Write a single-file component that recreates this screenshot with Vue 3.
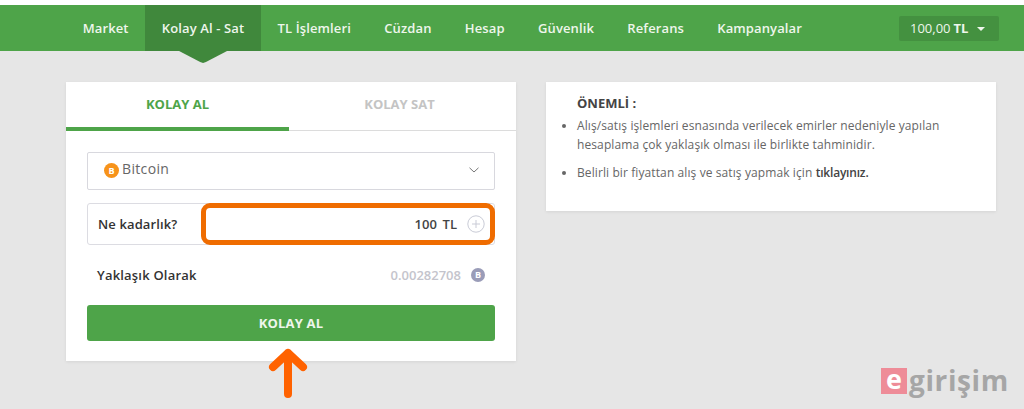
<script setup>
const navItems = ['Market', 'Kolay Al - Sat', 'TL İşlemleri', 'Cüzdan', 'Hesap', 'Güvenlik', 'Referans', 'Kampanyalar']
const activeItem = 'Kolay Al - Sat'
</script>

<template>
  <div class="page">
    <header class="nav">
      <ul class="menu">
        <li v-for="item in navItems" :key="item" class="menu-item" :class="{ active: item === activeItem }">{{ item }}</li>
      </ul>
      <div class="balance"><span>100,00</span><b>TL</b><span class="caret"></span></div>
    </header>

    <main class="content">
      <section class="card trade">
        <div class="tabs">
          <div class="tab on">KOLAY AL</div>
          <div class="tab">KOLAY SAT</div>
        </div>
        <div class="form">
          <div class="select">
            <svg class="coin" width="15" height="15" viewBox="0 0 15 15">
              <circle cx="7.5" cy="7.5" r="7.5" fill="#f7931a" />
              <text x="7.5" y="11" text-anchor="middle" class="coin-b">B</text>
            </svg>
            <span class="select-text">Bitcoin</span>
            <svg class="chev" width="10" height="6" viewBox="0 0 10 6">
              <path d="M.5 .8 5 5 9.5 .8" fill="none" stroke="#777" stroke-width="1" />
            </svg>
          </div>

          <div class="amount">
            <span class="amount-label">Ne kadarlık?</span>
            <div class="amount-box">
              <span class="amount-value">100&nbsp; TL</span>
              <svg width="18" height="18" viewBox="0 0 18 18">
                <circle cx="9" cy="9" r="8.2" fill="#fff" stroke="#c9cbd6" />
                <path d="M9 5v8M5 9h8" stroke="#c9cbd6" />
              </svg>
            </div>
          </div>

          <div class="approx">
            <span class="approx-label">Yaklaşık Olarak</span>
            <span class="approx-value">0.00282708</span>
            <svg width="14" height="14" viewBox="0 0 14 14">
              <circle cx="7" cy="7" r="7" fill="#9a9cb8" />
              <text x="7" y="10.2" text-anchor="middle" class="coin-b">B</text>
            </svg>
          </div>

          <button class="buy">KOLAY AL</button>
        </div>
        <svg class="arrow" width="40" height="52" viewBox="0 0 40 52">
          <path d="M20 47V6M5 20 20 6l15 14" fill="none" stroke="#ff6200" stroke-width="8" stroke-linecap="round" stroke-linejoin="round" />
        </svg>
      </section>

      <section class="card info">
        <h3>ÖNEMLİ :</h3>
        <ul>
          <li>Alış/satış işlemleri esnasında verilecek emirler nedeniyle yapılan hesaplama çok yaklaşık olması ile birlikte tahminidir.</li>
          <li>Belirli bir fiyattan alış ve satış yapmak için <strong>tıklayınız.</strong></li>
        </ul>
      </section>
    </main>

    <div class="logo"><span class="logo-e">e</span><span class="logo-text">girişim</span></div>
  </div>
</template>

<style>
html, body { margin: 0; background: #e6e6e6; }
</style>

<style scoped>
.page {
  position: relative;
  width: 1024px;
  height: 409px;
  overflow: hidden;
  background: #e6e6e6;
  border-top: 5px solid #fff;
  box-sizing: border-box;
  font-family: "Open Sans", sans-serif;
}
.nav {
  height: 46px;
  background: #4ea449;
  display: flex;
  align-items: center;
  justify-content: space-between;
  padding: 0 25px 0 66px;
}
.menu {
  display: flex;
  list-style: none;
  margin: 0;
  padding: 0;
  height: 100%;
}
.menu-item {
  position: relative;
  display: flex;
  align-items: center;
  padding: 0 16.65px;
  color: #eef6ec;
  font-size: 13px;
  font-weight: 600;
  letter-spacing: 0.12px;
}
.menu-item.active { background: #40883c; }
.menu-item.active::after {
  content: "";
  position: absolute;
  left: 50%;
  top: 46px;
  width: 48px;
  height: 12px;
  margin-left: -24px;
  background: #40883c;
  clip-path: polygon(0 0, 100% 0, 56% 92%, 50% 100%, 44% 92%);
}
.balance {
  width: 100px;
  height: 25px;
  box-sizing: border-box;
  padding-left: 11px;
  background: #449140;
  border-radius: 2px;
  color: #eef6ec;
  font-size: 13px;
  font-weight: 400;
  line-height: 25px;
  display: flex;
  gap: 3px;
}
.balance b { font-weight: 700; }
.caret {
  width: 0;
  height: 0;
  margin: 11px 0 0 6px;
  border-left: 4px solid transparent;
  border-right: 4px solid transparent;
  border-top: 4px solid #eef6ec;
}
.content {
  display: flex;
  align-items: flex-start;
  gap: 30px;
  padding: 31px 0 0 66px;
}
.card {
  width: 450px;
  background: #fff;
  box-shadow: 0 1px 3px rgba(0, 0, 0, 0.08);
  box-sizing: border-box;
}
.trade { position: relative; height: 279px; }
.tabs {
  display: flex;
  height: 49px;
  border-bottom: 1px solid #dcdcdc;
  box-sizing: border-box;
}
.tab {
  text-align: center;
  line-height: 45px;
  height: 49px;
  box-sizing: border-box;
  font-size: 13px;
  font-weight: 700;
  color: #c4c4c4;
}
.tab.on { width: 223px; color: #4ea449; border-bottom: 4px solid #4ea449; }
.tab:last-child { flex: 1; padding-right: 6px; }
.form {
  padding: 21px 21px 0;
  display: flex;
  flex-direction: column;
}
.select {
  height: 38px;
  box-sizing: border-box;
  border: 1px solid #d8d8de;
  border-radius: 2px;
  display: flex;
  align-items: center;
  padding: 0 15px 2px 16px;
}
.select-text {
  margin: 0 0 3px 3px;
  font-size: 14px;
  font-weight: 500;
  letter-spacing: 0.35px;
  color: #666;
  flex: 1;
}
.coin-b {
  font-family: "Open Sans", sans-serif;
  font-size: 9px;
  font-weight: 700;
  fill: #fff;
}
.amount {
  height: 42px;
  margin-top: 13px;
  box-sizing: border-box;
  border: 1px solid #dcdce2;
  border-radius: 3px;
  display: flex;
  align-items: center;
  position: relative;
}
.amount-label {
  padding-left: 10px;
  width: 105px;
  box-sizing: border-box;
  font-size: 13px;
  font-weight: 600;
  color: #333;
  letter-spacing: 0.12px;
}
.amount-box {
  position: absolute;
  left: 115px;
  right: -1px;
  top: -1px;
  bottom: -1px;
  margin-left: -2px;
  border: 5px solid #ef6c00;
  border-radius: 9px;
  background: #fff;
  display: flex;
  align-items: center;
  justify-content: flex-end;
  padding-right: 5px;
  gap: 10px;
}
.amount-value {
  font-size: 13px;
  font-weight: 600;
  color: #444;
  word-spacing: -0.5px;
}
.approx {
  height: 60px;
  display: flex;
  align-items: center;
  padding: 0 10px;
}
.approx-label {
  flex: 1;
  font-size: 13px;
  font-weight: 600;
  color: #333;
  letter-spacing: 0.2px;
}
.approx-value {
  margin-right: 10px;
  font-size: 13px;
  font-weight: 600;
  color: #c4c4cc;
}
.buy {
  height: 36px;
  border: 0;
  border-radius: 3px;
  background: #4ea449;
  color: #eef6ec;
  font-family: inherit;
  font-size: 13px;
  font-weight: 700;
  letter-spacing: 0.2px;
  padding: 0;
}
.arrow {
  position: absolute;
  left: 202px;
  top: 265px;
}
.info {
  height: 129px;
  padding: 12px 31px 0;
  color: #666;
  font-size: 12px;
  line-height: 19px;
  letter-spacing: 0.1px;
}
.info h3 {
  margin: 0 0 4px;
  font-size: 13px;
  font-weight: 700;
  color: #444;
  line-height: 18px;
  letter-spacing: 0;
}
.info ul { margin: 0; padding: 0; list-style: disc; }
.info li { margin-bottom: 9px; width: 385px; }
.info strong { font-weight: 600; color: #444; letter-spacing: -0.2px; }
.logo {
  position: absolute;
  left: 881px;
  top: 362px;
  display: flex;
  align-items: center;
  gap: 2px;
}
.logo-e {
  width: 26px;
  height: 26px;
  background: #ee8c98;
  color: #fff;
  font-size: 27px;
  font-weight: 700;
  line-height: 22px;
  text-align: center;
}
.logo-text {
  font-size: 28px;
  font-weight: 700;
  color: #a6a6a6;
  letter-spacing: 0.6px;
  line-height: 27px;
}
</style>
